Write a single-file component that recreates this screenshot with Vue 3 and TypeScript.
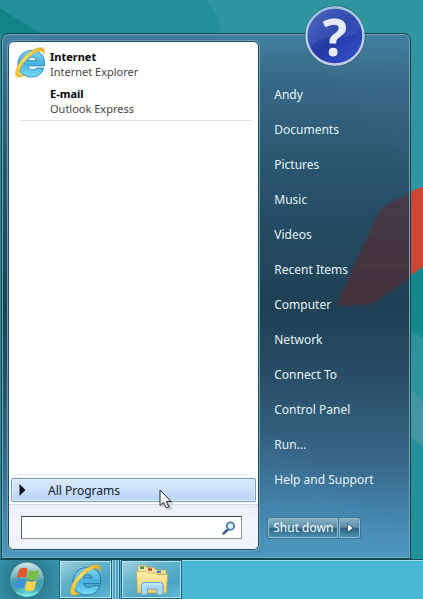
<script setup lang="ts">
import { ref } from 'vue'

interface Program {
  title: string
  subtitle: string
  icon: boolean
}

const programs: Program[] = [
  { title: 'Internet', subtitle: 'Internet Explorer', icon: true },
  { title: 'E-mail', subtitle: 'Outlook Express', icon: false },
]

const places: string[] = [
  'Andy',
  'Documents',
  'Pictures',
  'Music',
  'Videos',
  'Recent Items',
  'Computer',
  'Network',
  'Connect To',
  'Control Panel',
  'Run...',
  'Help and Support',
]

const query = ref('')
</script>

<template>
  <div class="desktop">
    <svg class="wallpaper" viewBox="0 0 423 599" preserveAspectRatio="xMaxYMin slice" aria-hidden="true">
      <rect width="423" height="599" fill="#279099" />
      <path d="M0 0H207Q217 13 222 34H0Z" fill="#248f98" />
      <path d="M207 0H423V192H380V34H222Q218 14 207 0Z" fill="#2f96a1" />
      <path d="M0 8Q18 20 42 34H0Z" fill="#128489" />
      <path d="M400 195L423 187V267L400 283Z" fill="#cc4834" />
      <path d="M400 283L423 267V338L400 326Z" fill="#11898d" />
      <path d="M400 324L423 338V402L400 382Z" fill="#2c939c" />
      <path d="M400 378L423 402V446L400 430Z" fill="#43989f" />
      <path d="M400 430L423 446V599H400Z" fill="#22919a" />
    </svg>

    <main class="stage">
      <section class="menu" aria-label="Start menu">
        <svg class="reflection" viewBox="0 0 150 520" preserveAspectRatio="xMaxYMin slice" aria-hidden="true">
          <defs>
            <linearGradient id="redGlass" x1="0" y1="0" x2="0" y2="1">
              <stop offset="0" stop-color="#463b49" />
              <stop offset="1" stop-color="#43303c" />
            </linearGradient>
            <filter id="soften"><feGaussianBlur stdDeviation="1" /></filter>
            <filter id="haze"><feGaussianBlur stdDeviation="8" /></filter>
          </defs>
          <path d="M40 0L150 130V0Z" fill="#5f91ab" opacity="0.06" filter="url(#haze)" />
          <path d="M154 156L126 170Q121 174 117 182L80 264Q78 270 86 270L114 268L154 240Z" fill="url(#redGlass)" filter="url(#soften)" />
          <path d="M0 400L150 500V520H0Z" fill="#5da8d0" opacity="0.08" filter="url(#haze)" />
        </svg>

        <div class="programs">
          <ul class="pinned">
            <li v-for="p in programs" :key="p.title">
              <a href="#" class="program">
                <span class="program-icon">
                  <svg v-if="p.icon" viewBox="0 0 32 32" width="31" height="31" aria-hidden="true">
                    <defs>
                      <linearGradient id="ieBlue" x1="0" y1="0" x2="0" y2="1">
                        <stop offset="0" stop-color="#86d5f2" />
                        <stop offset="0.5" stop-color="#48b0e0" />
                        <stop offset="1" stop-color="#78dcf5" />
                      </linearGradient>
                      <linearGradient id="ieGold" x1="0" y1="1" x2="1" y2="0">
                        <stop offset="0" stop-color="#efc02f" />
                        <stop offset="0.5" stop-color="#fbe05f" />
                        <stop offset="1" stop-color="#e9b024" />
                      </linearGradient>
                    </defs>
                    <path d="M30.500 19.500H13.500Q14 23.500 18 23.500Q21 23.500 22.500 21.700H29.800Q26.500 31 17.500 31C8.500 31 3 25.500 3 17.500C3 9 9.500 3.500 17.500 3.500C26.500 3.500 31.500 10 30.500 19.500ZM13.300 14H22Q21.500 10.500 17.800 10.500Q14 10.500 13.300 14Z" fill="url(#ieBlue)" stroke="#2c86b8" stroke-width="0.900" />
                    <path d="M29.600 8.500C32.500 0 26.500 -1.500 18 3.500C8 9 -0.500 22 0.500 28.500C1.500 32.500 6 31.500 10.500 28.800C6.500 29.500 4.500 28.500 4.800 25C5.500 19 13 10.500 20 6.300C26 3 30 3.500 29.600 8.500Z" fill="url(#ieGold)" stroke="#cf9e2a" stroke-width="0.400" />
                  </svg>
                </span>
                <span class="program-text">
                  <strong>{{ p.title }}</strong>
                  <span>{{ p.subtitle }}</span>
                </span>
              </a>
            </li>
          </ul>

          <div class="all-wrap">
            <button type="button" class="all-programs">
              <svg width="8" height="12" viewBox="0 0 8 12" aria-hidden="true">
                <path d="M0.500 0L6.500 6L0.500 12Z" fill="#111" />
              </svg>
              <span>All Programs</span>
            </button>
          </div>

          <form class="search" role="search" @submit.prevent>
            <label class="search-box">
              <input v-model="query" type="search" aria-label="Search" />
              <svg width="14" height="14" viewBox="0 0 14 14" aria-hidden="true">
                <path d="M6 8.500L1.500 12.500" stroke="#3c5f94" stroke-width="2.400" stroke-linecap="round" />
                <circle cx="8.500" cy="5" r="3.700" fill="#d9effa" stroke="#4679aa" stroke-width="1.700" />
              </svg>
            </label>
          </form>
        </div>

        <div class="side">
          <nav class="places" aria-label="Places">
            <a v-for="place in places" :key="place" href="#">{{ place }}</a>
          </nav>
          <div class="power">
            <button type="button" class="shutdown">Shut down</button>
            <button type="button" class="power-more" aria-label="Power options">
              <svg width="8" height="10" viewBox="0 0 8 10" aria-hidden="true">
                <path d="M1.500 0.500L7 5L1.500 9.500Z" fill="#fff" stroke="#1f4358" stroke-width="0.800" />
              </svg>
            </button>
          </div>
        </div>

        <div class="avatar" aria-hidden="true">
          <svg class="avatar-disc" viewBox="0 0 62 62">
            <defs>
              <linearGradient id="disc" x1="0" y1="0" x2="1" y2="1">
                <stop offset="0" stop-color="#4a63bb" />
                <stop offset="0.500" stop-color="#2439a4" />
                <stop offset="1" stop-color="#3453cf" />
              </linearGradient>
              <linearGradient id="rim" x1="0" y1="0" x2="0" y2="1">
                <stop offset="0" stop-color="#acd2ea" />
                <stop offset="1" stop-color="#c5cde6" />
              </linearGradient>
            </defs>
            <circle cx="31" cy="31" r="30.500" fill="#255466" opacity="0.600" />
            <circle cx="31" cy="31" r="28.500" fill="url(#disc)" stroke="url(#rim)" stroke-width="2.400" />
            <path d="M4 37A27 27 0 0 1 57 22Q50 34 32 32Q14 32 6 43Z" fill="#5d7acb" opacity="0.250" />
          </svg>
          <span class="mark">?</span>
        </div>

        <svg class="cursor" width="15" height="22" viewBox="0 0 15 22" aria-hidden="true">
          <path d="M3 3V19L7 15L10 21L13 20L10.500 14.500H15Z" fill="#234" opacity="0.250" />
          <path d="M1 1V16.500L4.600 13.300L7.300 19L9.800 17.900L7.200 12.400H12Z" fill="#fff" stroke="#1b2533" stroke-width="1" />
        </svg>
      </section>
    </main>

    <footer class="taskbar">
      <button type="button" class="start" aria-label="Start">
        <svg width="38" height="38" viewBox="0 0 38 38" aria-hidden="true">
          <defs>
            <radialGradient id="orb" cx="0.500" cy="0.950" r="0.900">
              <stop offset="0" stop-color="#6fe0dc" />
              <stop offset="0.450" stop-color="#3fa0ae" />
              <stop offset="1" stop-color="#5ba5b1" />
            </radialGradient>
            <linearGradient id="gloss" x1="0" y1="0" x2="0" y2="1">
              <stop offset="0" stop-color="#e2f1f2" stop-opacity="0.900" />
              <stop offset="1" stop-color="#a5c8cc" stop-opacity="0.300" />
            </linearGradient>
          </defs>
          <circle cx="19" cy="19" r="17.500" fill="url(#orb)" stroke="#2b7687" />
          <path d="M2.500 18A16.500 16.500 0 0 1 35.500 18Q27 20 19 18Q10 15.500 2.500 18Z" fill="url(#gloss)" />
          <path d="M11.500 8Q15.500 5.500 19.800 8L17.800 17Q13.500 15 8.500 17.300Z" fill="#e2572c" />
          <path d="M21.300 9Q26 11.500 31.500 8.500L29 18Q24 20.500 19.200 17.800Z" fill="#7cbd45" />
          <path d="M8 19Q13 16.500 17.300 18.800L15.300 27.500Q10.500 25.500 5.500 28Z" fill="#3c91d8" />
          <path d="M18.800 19.500Q23.500 22 28.500 19.500L26 29Q21 31.500 16.800 28.800Z" fill="#fcd24a" />
          <path d="M8 31Q19 38 30 31" fill="none" stroke="#8df2ee" stroke-width="2" opacity="0.600" />
        </svg>
      </button>

      <button type="button" class="task stacked" aria-label="Internet Explorer">
        <svg width="32" height="32" viewBox="0 0 32 32" aria-hidden="true">
          <path d="M30.500 19.500H13.500Q14 23.500 18 23.500Q21 23.500 22.500 21.700H29.800Q26.500 31 17.500 31C8.500 31 3 25.500 3 17.500C3 9 9.500 3.500 17.500 3.500C26.500 3.500 31.500 10 30.500 19.500ZM13.300 14H22Q21.500 10.500 17.800 10.500Q14 10.500 13.300 14Z" fill="url(#ieBlue)" stroke="#287dae" stroke-width="1" />
          <path d="M29.600 8.500C32.500 0 26.500 -1.500 18 3.500C8 9 -0.500 22 0.500 28.500C1.500 32.500 6 31.500 10.500 28.800C6.500 29.500 4.500 28.500 4.800 25C5.500 19 13 10.500 20 6.300C26 3 30 3.500 29.600 8.500Z" fill="url(#ieGold)" stroke="#cf9e2a" stroke-width="0.400" />
        </svg>
      </button>
      <span class="stack-edge" aria-hidden="true"></span>

      <button type="button" class="task" aria-label="File Explorer">
        <svg width="34" height="32" viewBox="0 0 34 32" aria-hidden="true">
          <defs>
            <linearGradient id="folder" x1="0" y1="0" x2="0" y2="1">
              <stop offset="0" stop-color="#fdf0ae" />
              <stop offset="1" stop-color="#efcf72" />
            </linearGradient>
          </defs>
          <path d="M3 3Q3 1.500 4.500 1.500H10L12 3.500H19L21 6H31V10H3Z" fill="#f3e2a0" stroke="#c9a851" stroke-width="0.700" />
          <rect x="5" y="2.500" width="4" height="2.500" fill="#3f9150" />
          <rect x="13" y="4.300" width="4" height="2.500" fill="#c8452f" />
          <rect x="22" y="6.500" width="4" height="2.500" fill="#4a86b8" />
          <path d="M1.500 7.500H11L13 9H21L23 10.500H32.500L31.500 29H2.500Z" fill="url(#folder)" stroke="#cdaa4d" stroke-width="0.800" />
          <path d="M6.500 31V21Q6.500 18.500 9 18.500H25.500Q28 18.500 28 21V31H22V25H12.500V31Z" fill="#a9daf0" stroke="#5d9dc7" stroke-width="0.900" />
          <path d="M8 21Q8 20 9.500 20H25Q26.500 20 26.500 21" fill="none" stroke="#e9f8fe" />
        </svg>
      </button>
    </footer>
  </div>
</template>

<style>
body {
  margin: 0;
}
</style>

<style scoped>
.desktop {
  position: relative;
  display: flex;
  flex-direction: column;
  min-height: 100vh;
  overflow: hidden;
  background: #279099;
  font-family: "Noto Sans", "Open Sans", sans-serif;
  font-size: 12px;
  line-height: 15px;
}

.wallpaper {
  position: absolute;
  inset: 0;
  width: 100%;
  height: 100%;
}

.stage {
  position: relative;
  flex: 1;
  display: flex;
  padding: 33px 12px 0 1px;
}

.menu {
  position: relative;
  flex: 1;
  display: grid;
  grid-template-columns: 5fr 3fr;
  box-sizing: border-box;
  padding: 7px 0 8px 6px;
  border: 1px solid #123f50;
  border-radius: 7px 7px 0 0;
  box-shadow: inset 0 0 0 1px #74a6b9;
  background: linear-gradient(#41809f 0%, #376b89 8%, #2d5872 22%, #244a60 38%, #1f4054 52%, #294e66 66%, #38698a 82%, #478ab2 94%, #4c98c0 100%);
}

.reflection {
  position: absolute;
  top: 1px;
  right: 1px;
  bottom: 1px;
  width: 36%;
  height: calc(100% - 2px);
}

.programs {
  position: relative;
  display: flex;
  flex-direction: column;
  overflow: hidden;
  border: 1px solid #1f4c64;
  border-radius: 6px;
  background: #fff;
  box-shadow: 0 0 0 1px #6d9fb6;
}

.pinned {
  flex: 1;
  margin: 0 7px 0 6px;
  padding: 0;
  list-style: none;
}

.program {
  display: flex;
  align-items: flex-start;
  gap: 3px;
  height: 37px;
  padding-top: 5px;
  box-sizing: border-box;
  color: #454545;
  font-size: 11px;
  text-decoration: none;
}

.pinned li:last-child {
  padding-bottom: 5px;
  background: linear-gradient(#dcdfe2, #dcdfe2) right bottom / calc(100% - 5px) 1px no-repeat;
}

.program-icon {
  width: 32px;
  height: 32px;
}

.program-text {
  display: flex;
  flex-direction: column;
  padding-top: 2px;
}

.program-text strong {
  color: #000;
}

.all-wrap {
  padding: 4px 2px 2px;
  background: linear-gradient(#d6e5f5, #d6e5f5) center top / calc(100% - 18px) 1px no-repeat;
}

.all-programs {
  display: flex;
  align-items: center;
  gap: 21px;
  width: 100%;
  height: 24px;
  padding: 0 7px;
  border: 1px solid #6f9ad0;
  border-radius: 2px;
  background: linear-gradient(#dcebfd, #b7d4fa);
  box-shadow: inset 0 0 0 1px #e4f0fe;
  color: #14202e;
  font: inherit;
  text-align: left;
}

.search {
  padding: 11px 16px 10px 12px;
  border-top: 1px solid #d5dde8;
  background: linear-gradient(#e9eef6, #f2f5fb 30%, #eff3fa);
}

.search-box {
  display: flex;
  align-items: center;
  height: 21px;
  padding-right: 5px;
  border: 1px solid #8e9299;
  border-top-color: #3c4048;
  border-left-color: #5c6068;
  background: #fff;
}

.search-box input {
  flex: 1;
  min-width: 0;
  padding: 0 4px;
  border: 0;
  outline: 0;
  background: none;
  font: inherit;
}

.side {
  position: relative;
  display: flex;
  flex-direction: column;
  justify-content: space-between;
  padding: 36px 8px 12px 9px;
}

.places {
  display: flex;
  flex-direction: column;
  padding-left: 6px;
}

.places a {
  height: 35px;
  line-height: 35px;
  color: #e3f3fa;
  text-decoration: none;
}

.power {
  display: flex;
}

.power button {
  box-sizing: border-box;
  height: 20px;
  border: 1px solid #8dbdd2;
  background: linear-gradient(#84aebf 0%, #5e90a8 46%, #2f6683 52%, #4a8eae 100%);
  color: #f4fbff;
  font: inherit;
  line-height: 16px;
  box-shadow: 0 0 0 1px #3e7592;
}

.power .shutdown {
  padding: 0 4px;
  border-radius: 2px 0 0 2px;
}

.power .power-more {
  display: flex;
  align-items: center;
  justify-content: center;
  width: 21px;
  margin-left: 1px;
  padding: 0;
  border-radius: 0 2px 2px 0;
}

.avatar {
  position: absolute;
  top: -29px;
  right: 44px;
  width: 62px;
  height: 62px;
}

.avatar-disc {
  position: absolute;
  inset: 0;
}

.mark {
  position: absolute;
  inset: 0;
  color: #e6ebf5;
  font-family: "Open Sans", sans-serif;
  font-size: 52px;
  font-weight: 700;
  line-height: 62px;
  text-align: center;
}

.cursor {
  position: absolute;
  bottom: 47px;
  left: 157px;
}

.taskbar {
  position: relative;
  display: flex;
  box-sizing: border-box;
  height: 40px;
  border-top: 1px solid #0f4a5c;
  background: #49b6d5;
  box-shadow: inset 0 1px 0 #a2e0ec;
}

.start {
  display: flex;
  width: 59px;
  padding: 1px 0 0 8px;
  border: 0;
  background: radial-gradient(circle at 27px 20px, #2c7a8d 40%, #3595ad 95%);
}

.task {
  display: flex;
  align-items: center;
  justify-content: center;
  box-sizing: border-box;
  width: 61px;
  padding: 0;
  border: 1px solid #24627a;
  background: linear-gradient(150deg, #a5d3df 0%, #68b4cc 35%, #49a5c4 70%, #5fbbd3 100%);
  box-shadow: inset 0 0 0 1px #b5e1ec;
}

.task.stacked {
  width: 53px;
}

.stack-edge {
  box-sizing: border-box;
  width: 7px;
  margin-right: 2px;
  border: solid #9fd5e2;
  border-width: 0 1px;
  background: linear-gradient(90deg, #4ba3bd 2px, #9fd5e2 2px 3px, #4ba3bd 3px);
  box-shadow: 1px 0 0 #24627a;
}
</style>
